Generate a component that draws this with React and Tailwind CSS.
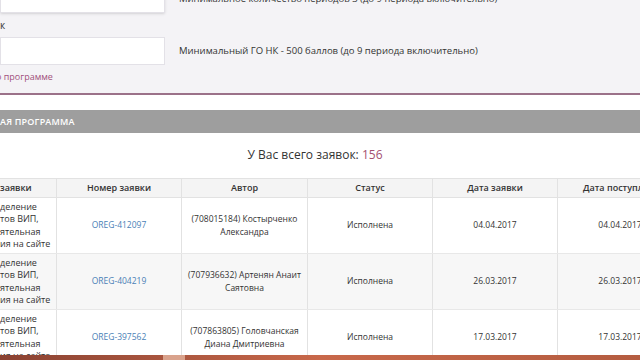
import React from "react";

const rows = [
  {
    type: ["деление", "тов ВИП,", "ятельная", "ия на сайте"],
    id: "OREG-412097",
    author: ["(708015184) Костырченко", "Александра"],
    status: "Исполнена",
    date: "04.04.2017",
    received: "04.04.2017",
  },
  {
    type: ["деление", "тов ВИП,", "ятельная", "ия на сайте"],
    id: "OREG-404219",
    author: ["(707936632) Артенян Анаит", "Саятовна"],
    status: "Исполнена",
    date: "26.03.2017",
    received: "26.03.2017",
  },
  {
    type: ["деление", "тов ВИП,", "ятельная", "ия на сайте"],
    id: "OREG-397562",
    author: ["(707863805) Головчанская", "Диана Дмитриевна"],
    status: "Исполнена",
    date: "17.03.2017",
    received: "17.03.2017",
  },
];

const cols = "grid grid-cols-[57px_125px_126px_125px_125px_125px] w-[683px]";
const cell = "flex items-center justify-center text-center border-r border-[#e2e2e2]";

export default function App() {
  return (
    <div
      className="w-[640px] h-[360px] overflow-hidden flex flex-col bg-white text-[#333]"
      style={{ fontFamily: '"Open Sans", "Noto Sans", sans-serif' }}
    >
      <div className="flex-1 overflow-hidden flex flex-col">
        {/* form area */}
        <div className="bg-[#f4f3f6] h-[93px] shrink-0 flex flex-col text-[9.5px]">
          <div className="flex items-center h-[28px] mt-[-15px] shrink-0">
            <div className="w-[165px] h-[28px] bg-white border border-[#e3e1e7] shadow-sm" />
            <span className="ml-[14px] whitespace-nowrap">
              Минимальное количество периодов 3 (до 9 периода включительно)
            </span>
          </div>
          <div className="h-[24px] flex items-center shrink-0 text-[10px]">
            <span>к</span>
          </div>
          <div className="flex items-center h-[28px] shrink-0">
            <div className="w-[165px] h-[28px] bg-white border border-[#e3e1e7]" />
            <span className="ml-[14px] whitespace-nowrap">
              Минимальный ГО НК - 500 баллов (до 9 периода включительно)
            </span>
          </div>
          <div className="mt-[5px] leading-[14px] text-[9px] text-[#a2507c] ml-[-4px] whitespace-nowrap">
            о программе
          </div>
        </div>
        <div className="h-[2px] bg-[#9b7189] shrink-0" />
        <div className="h-[15px] shrink-0" />
        <div className="h-[23px] bg-[#9e9e9e] shrink-0 flex items-center">
          <span className="text-white font-semibold text-[9px] tracking-[0.2px] whitespace-nowrap">
            АЯ ПРОГРАММА
          </span>
        </div>
        <div className="h-[45px] shrink-0 flex items-center justify-center text-[12px] pb-[1px]">
          <span className="ml-[-10px]">
            У Вас всего заявок: <span className="text-[#a4506f]">156</span>
          </span>
        </div>

        {/* table */}
        <div className="text-[8.5px] leading-[12.3px]">
          <div className={`${cols} h-[20px] bg-[#f4f4f4] border-y border-[#e2e2e2] font-semibold text-[9px]`}>
            <div className={`${cell} justify-start`}>заявки</div>
            <div className={cell}>Номер заявки</div>
            <div className={cell}>Автор</div>
            <div className={cell}>Статус</div>
            <div className={cell}>Дата заявки</div>
            <div className={`${cell} justify-start pl-[25px] whitespace-nowrap`}>Дата поступления</div>
          </div>
          {rows.map((r, i) => (
            <div
              key={r.id}
              className={`${cols} h-[56px] border-b border-[#e8e8e8] ${i % 2 === 1 ? "bg-[#f7f7f7]" : "bg-white"}`}
            >
              <div className={`${cell} justify-start text-left text-[9px]`}>
                <div className="flex flex-col whitespace-nowrap">
                  {r.type.map((t) => (
                    <span key={t}>{t}</span>
                  ))}
                </div>
              </div>
              <div className={cell}>
                <span className="text-[#4a7fb6]">{r.id}</span>
              </div>
              <div className={cell}>
                <div className="flex flex-col">
                  {r.author.map((a) => (
                    <span key={a}>{a}</span>
                  ))}
                </div>
              </div>
              <div className={cell}>{r.status}</div>
              <div className={cell}>{r.date}</div>
              <div className={cell}>{r.received}</div>
            </div>
          ))}
        </div>
      </div>

      {/* taskbar strip */}
      <div className="h-[5px] shrink-0 flex bg-linear-to-r from-[#8a4232] via-[#c8684a] to-[#b45c40]">
        <div className="w-[163px]" />
        <div className="w-[22px] bg-[#d9a28c]" />
      </div>
    </div>
  );
}
